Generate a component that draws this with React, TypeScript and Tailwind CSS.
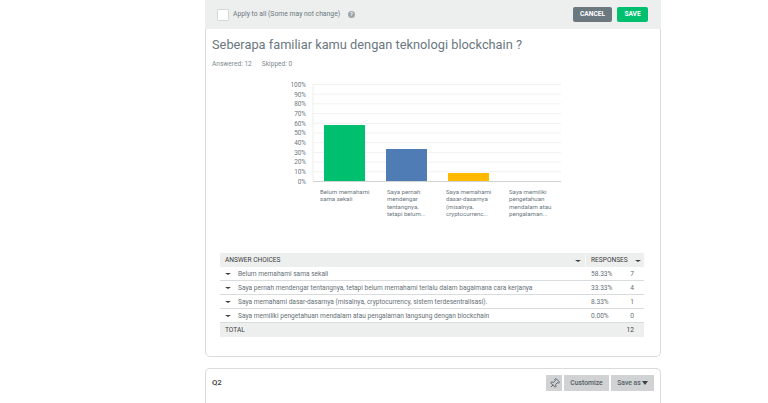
import { Pin } from 'lucide-react'

const rows = [
  ['Belum memahami sama sekali', '58.33%', '7'],
  ['Saya pernah mendengar tentangnya, tetapi belum memahami terlalu dalam bagaimana cara kerjanya', '33.33%', '4'],
  ['Saya memahami dasar-dasarnya (misalnya, cryptocurrency, sistem terdesentralisasi).', '8.33%', '1'],
  ['Saya memiliki pengetahuan mendalam atau pengalaman langsung dengan blockchain', '0.00%', '0'],
]

const ticks = [100, 90, 80, 70, 60, 50, 40, 30, 20, 10, 0]

const bars = [
  { x: 44, y: 42, h: 56, fill: '#00bf6f' },
  { x: 106, y: 66, h: 32, fill: '#507cb6' },
  { x: 168, y: 90, h: 8, fill: '#ffba00' },
]

const labels = [
  { w: 'w-[67px]', lines: ['Belum memahami', 'sama sekali'] },
  { w: 'w-[59px]', lines: ['Saya pernah', 'mendengar', 'tentangnya,', 'tetapi belum...'] },
  { w: 'w-[63px]', lines: ['Saya memahami', 'dasar-dasarnya', '(misalnya,', 'cryptocurrenc...'] },
  { w: 'w-[60px]', lines: ['Saya memiliki', 'pengetahuan', 'mendalam atau', 'pengalaman...'] },
]

function Caret() {
  return <span className="h-0 w-0 border-x-[3px] border-t-[2.5px] border-x-transparent border-t-[#404040]" />
}

function Chart() {
  return (
    <svg width="290" height="107" viewBox="0 -4 290 107" className="block">
      {ticks.map((t, i) => (
        <g key={t}>
          <line x1="33" x2="281" y1={1.5 + i * 9.7} y2={1.5 + i * 9.7} stroke={t === 0 ? '#d0d2d3' : '#f0f1f1'} strokeWidth="1" />
          <text x="26" y={3.8 + i * 9.7} textAnchor="end" fontSize="6.4" fill="#6b787f">{t}%</text>
        </g>
      ))}
      <line x1="33" x2="33" y1="1" y2="98" stroke="#eceded" strokeWidth="1" />
      {bars.map(b => (
        <rect key={b.x} x={b.x} y={b.y} width="41" height={b.h} fill={b.fill} />
      ))}
    </svg>
  )
}

export default function App() {
  return (
    <div className="h-[403px] w-[768px] overflow-hidden bg-white font-['Roboto',sans-serif] text-[#6b787f]">
      <div className="ml-[205px] w-[456px]">
        {/* Edit bar */}
        <div className="flex h-[29px] items-center justify-between bg-[#edeeee] pl-[12px] pr-[13px]">
          <div className="flex items-center">
            <span className="h-[12px] w-[12px] rounded-[1px] border border-[#d5d8d9] bg-white" />
            <span className="ml-[4px] text-[6.8px] text-[#6b787f]">Apply to all (Some may not change)</span>
            <span className="ml-[8px] flex h-[7px] w-[7px] items-center justify-center rounded-full bg-[#9da5a9] text-[5px] font-bold text-white">?</span>
          </div>
          <div className="flex items-center gap-[5px]">
            <button className="h-[15px] w-[39px] rounded-[2px] bg-[#6b787f] text-[6.6px] font-bold text-white">CANCEL</button>
            <button className="h-[15px] w-[31px] rounded-[2px] bg-[#00bf6f] text-[6.6px] font-bold text-white">SAVE</button>
          </div>
        </div>

        {/* Q1 card */}
        <div className="h-[328px] rounded-b-[5px] border-x border-b border-[#d9dcdd] bg-white">
          <h2 className="ml-[6px] pt-[6px] text-[12.8px] leading-[20px] text-[#6b787f]">
            Seberapa familiar kamu dengan teknologi blockchain ?
          </h2>
          <div className="ml-[6px] mt-[5px] flex gap-[10px] text-[6.6px] leading-[9px] text-[#7d8a90]">
            <span>Answered: 12</span>
            <span>Skipped: 0</span>
          </div>
          <div className="ml-[74px] mt-[10px] h-[174px]">
            <Chart />
            <div className="mt-[2px] flex pl-[40px] text-[6.1px] leading-[7.4px] text-[#6b787f]">
              {labels.map(l => (
                <div key={l.lines[0]} className={l.w}>
                  {l.lines.map(line => (
                    <div key={line} className="whitespace-nowrap">{line}</div>
                  ))}
                </div>
              ))}
            </div>
          </div>
          <div className="ml-[14px] w-[424px] text-[6.6px] text-[#666f75]">
            <div className="flex h-[14px] items-center bg-[#edeeee] pt-px text-[#404040]">
              <div className="flex h-full w-[365px] items-center justify-between pl-[5px] pr-[4px]">
                <span>ANSWER CHOICES</span>
                <Caret />
              </div>
              <div className="flex h-full flex-1 items-center justify-between border-l border-[#f8f8f8] pl-[5px] pr-[3px]">
                <span>RESPONSES</span>
                <Caret />
              </div>
            </div>
            {rows.map(r => (
              <div key={r[0]} className="flex h-[14px] items-center border-b border-[#d9dcdd] pt-[2px] last:border-b-0">
                <div className="flex w-[365px] items-center pl-[5px]">
                  <Caret />
                  <span className="ml-[7px] whitespace-nowrap">{r[0]}</span>
                </div>
                <span className="ml-[6px] w-[33px]">{r[1]}</span>
                <span className="w-[10px] text-right">{r[2]}</span>
              </div>
            ))}
            <div className="flex h-[14px] items-center justify-between bg-[#edeeee] pl-[5px] pr-[10px] pt-px text-[#404040]">
              <span>TOTAL</span>
              <span>12</span>
            </div>
          </div>
        </div>

        {/* Q2 card */}
        <div className="mt-[11px] flex h-[60px] items-start justify-between rounded-t-[5px] border-x border-t border-[#d9dcdd] pl-[6px] pr-[6px] pt-[6px]">
          <span className="text-[7.8px] font-medium leading-[16px] text-[#404040]">Q2</span>
          <div className="flex gap-[2px]">
            <span className="flex h-[16px] w-[16px] items-center justify-center bg-[#d0d2d3]">
              <Pin size={11} strokeWidth={1.5} className="rotate-45 text-[#333e48]" />
            </span>
            <button className="h-[16px] w-[45px] bg-[#d0d2d3] text-[6.8px] font-medium text-[#555f64]">Customize</button>
            <button className="flex h-[16px] w-[43px] items-center justify-center gap-[1px] bg-[#d0d2d3] text-[6.8px] font-medium text-[#555f64]">
              Save as
              <span className="h-0 w-0 border-x-[3.5px] border-t-[4px] border-x-transparent border-t-[#404040]" />
            </button>
          </div>
        </div>
      </div>
    </div>
  )
}
